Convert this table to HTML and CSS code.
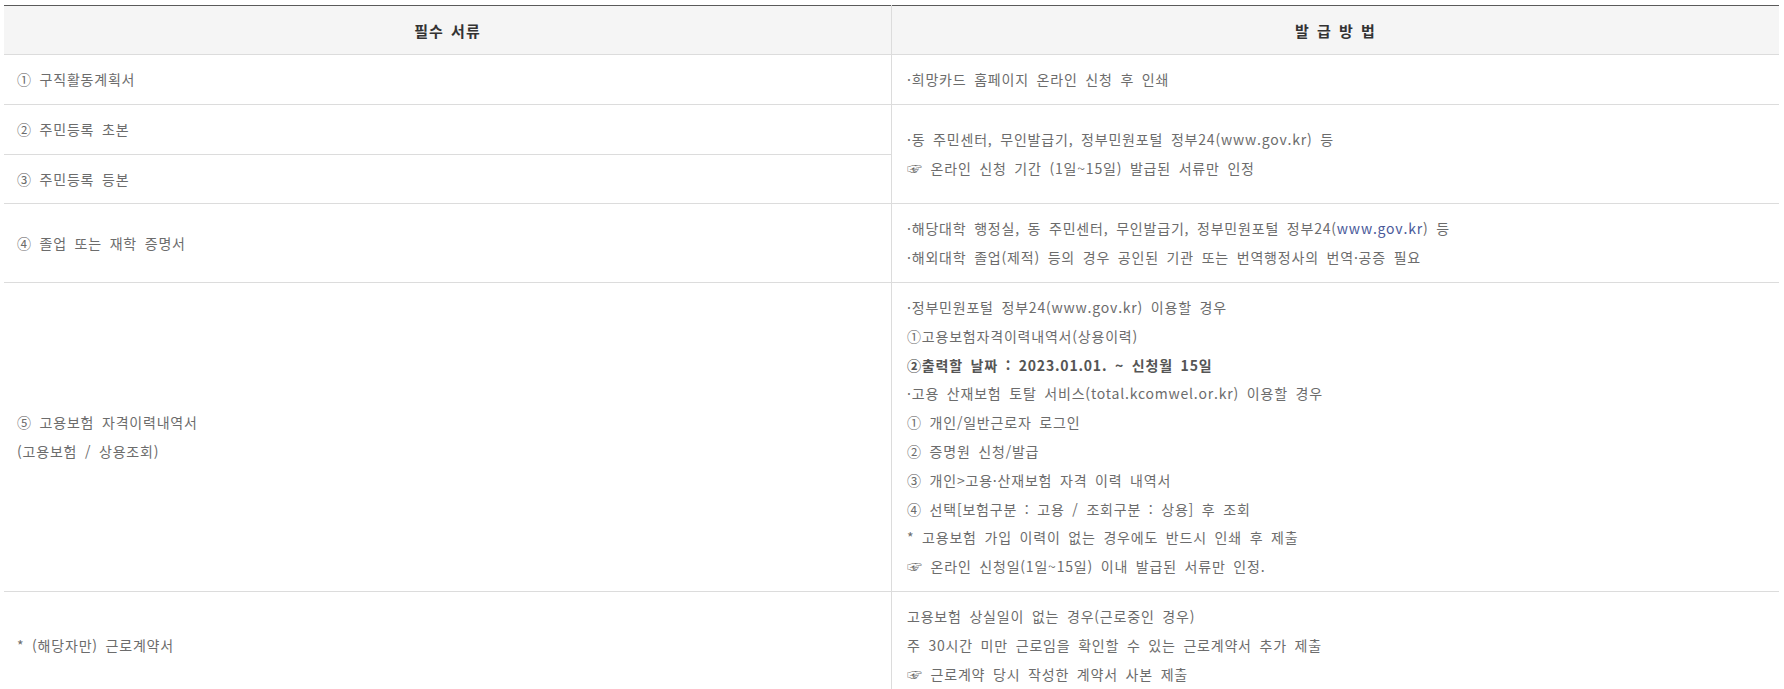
FILE: index.html
```html
<!DOCTYPE html>
<html lang="ko">
<head>
<meta charset="utf-8">
<title>필수 서류 및 발급 방법</title>
<link rel="stylesheet" href="styles.css">
</head>
<body>
<div class="wrap">
  <table class="doc-table">
    <colgroup>
      <col class="col-half">
      <col class="col-half">
    </colgroup>
    <thead>
      <tr>
        <th>필수 서류</th>
        <th>발 급 방 법</th>
      </tr>
    </thead>
    <tbody>
      <tr>
        <td>① 구직활동계획서</td>
        <td>·희망카드 홈페이지 온라인 신청 후 인쇄</td>
      </tr>
      <tr>
        <td>② 주민등록 초본</td>
        <td rowspan="2">·동 주민센터, 무인발급기, 정부민원포털 정부24(www.gov.kr) 등<br><span class="hand">☞</span> 온라인 신청 기간 (1일~15일) 발급된 서류만 인정</td>
      </tr>
      <tr>
        <td>③ 주민등록 등본</td>
      </tr>
      <tr>
        <td>④ 졸업 또는 재학 증명서</td>
        <td>·해당대학 행정실, 동 주민센터, 무인발급기, 정부민원포털 정부24(<a class="link" href="#">www.gov.kr</a>) 등<br>·해외대학 졸업(제적) 등의 경우 공인된 기관 또는 번역행정사의 번역·공증 필요</td>
      </tr>
      <tr>
        <td>⑤ 고용보험 자격이력내역서<br>(고용보험 / 상용조회)</td>
        <td>·정부민원포털 정부24(www.gov.kr) 이용할 경우<br>①고용보험자격이력내역서(상용이력)<br><strong class="em">②출력할 날짜 : 2023.01.01. ~ 신청월 15일</strong><br>·고용 산재보험 토탈 서비스(total.kcomwel.or.kr) 이용할 경우<br>① 개인/일반근로자 로그인<br>② 증명원 신청/발급<br>③ 개인&gt;고용·산재보험 자격 이력 내역서<br>④ 선택[보험구분 : 고용 / 조회구분 : 상용] 후 조회<br>* 고용보험 가입 이력이 없는 경우에도 반드시 인쇄 후 제출<br><span class="hand">☞</span> 온라인 신청일(1일~15일) 이내 발급된 서류만 인정.</td>
      </tr>
      <tr>
        <td>* (해당자만) 근로계약서</td>
        <td>고용보험 상실일이 없는 경우(근로중인 경우)<br>주 30시간 미만 근로임을 확인할 수 있는 근로계약서 추가 제출<br><span class="hand">☞</span> 근로계약 당시 작성한 계약서 사본 제출</td>
      </tr>
    </tbody>
  </table>
</div>
</body>
</html>
```

FILE: styles.css
```css
html, body {
  margin: 0;
  padding: 0;
  background: #ffffff;
}

body {
  font-family: "Noto Sans CJK KR", "Noto Sans", sans-serif;
  font-size: 14px;
  color: #6c6c6c;
}

.wrap {
  padding: 5px 0 0 4px;
  width: 1775px;
}

.doc-table {
  width: 100%;
  border-collapse: collapse;
  table-layout: fixed;
  border-top: 1px solid #5a5a5a;
}

.col-half {
  width: 50%;
}

.doc-table th {
  height: 48px;
  padding: 0;
  background: #f5f5f5;
  color: #333333;
  font-weight: bold;
  font-size: 15px;
  letter-spacing: 1px;
  word-spacing: 2px;
  text-align: center;
  vertical-align: middle;
  border-bottom: 1px solid #dcdcdc;
}

.doc-table th + th {
  border-left: 1px solid #dcdcdc;
}

.doc-table td {
  padding: 10px 13px;
  line-height: 28.8px;
  text-align: left;
  vertical-align: middle;
  letter-spacing: 0.8px;
  word-spacing: 3px;
  border-bottom: 1px solid #dcdcdc;
}

.doc-table td + td,
.doc-table td[rowspan] {
  border-left: 1px solid #dcdcdc;
  padding-left: 15px;
}

.hand {
  font-size: 15px;
  color: #666666;
}

.link {
  color: #4a5a9a;
  text-decoration: none;
}

.em {
  color: #555555;
  font-weight: bold;
}
```
